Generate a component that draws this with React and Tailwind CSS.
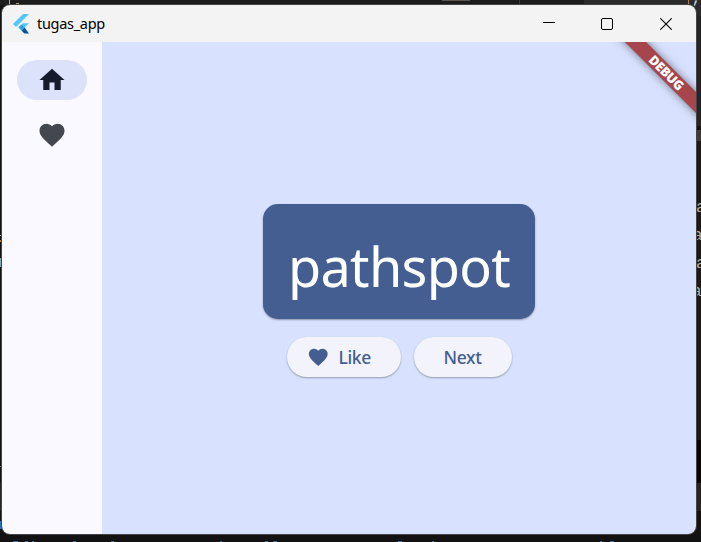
import React from "react";

const HOME = "M10 20v-6h4v6h5v-8h3L12 3 2 12h3v8z";
const HEART =
  "M12 21.35l-1.45-1.32C5.4 15.36 2 12.28 2 8.5 2 5.42 4.42 3 7.5 3c1.74 0 3.41.81 4.5 2.09C13.09 3.81 14.76 3 16.5 3 19.58 3 22 5.42 22 8.5c0 3.78-3.4 6.86-8.55 11.54L12 21.35z";

function Glyph({ d, className }) {
  return (
    <svg viewBox="0 0 24 24" fill="currentColor" className={className}>
      <path d={d} />
    </svg>
  );
}

function FlutterLogo() {
  return (
    <svg viewBox="0 0 16 20" className="h-5 w-4 shrink-0">
      <path d="M10 0H16L3.1 12.9L0 9.9Z" fill="#54c5f8" />
      <path d="M10 9.2H16L8.6 16.4L5.5 13.3Z" fill="#54c5f8" />
      <path d="M5.5 13.3L8.6 10.4L11.6 13.4L8.6 16.4Z" fill="#29a5e8" />
      <path d="M8.6 16.4L11.6 13.4L16 19.6H11.3Z" fill="#01579b" />
    </svg>
  );
}

// Editor visible around the window's edges
function Editor() {
  return (
    <div className="absolute inset-0 overflow-hidden bg-[#121212] font-['Liberation_Mono',monospace] text-[16px] leading-none text-[#b0b0b0]">
      <div className="absolute left-0 top-0 h-[5px] w-full bg-[#1c1c1c]" />
      <div className="absolute left-[584px] top-0 h-[16px] w-[117px] bg-[#2b2b2b]" />
      <div className="absolute left-[519px] top-0 h-[5px] w-px bg-[#383838]" />
      <div className="absolute left-[9px] top-0 h-[5px] w-px bg-[#78b9e8]" />
      <div className="absolute left-[16px] top-0 mt-[3px] h-[2px] w-[3px] bg-[#a99a85]" />
      <div className="absolute left-[442px] top-0 h-px w-[28px] bg-[#5c5651]" />
      <div className="absolute left-[691px] -top-[9px] text-[#c4cdd3]">;</div>
      <div className="absolute left-[688px] top-0 h-[5px] w-px bg-[#b77a4d]" />
      <div className="absolute left-[696px] top-[16px] h-[110px] w-[5px] bg-[#252525]" />
      <div className="absolute left-[696px] top-[130px] h-[11px] w-[5px] bg-[#3b3b3b]" />
      <div className="absolute left-[696px] top-[141px] h-[300px] w-[5px] bg-[#1a1a1a]" />
      <div className="absolute left-[696px] top-[440px] h-[43px] w-[5px] bg-[#060606]" />
      <div className="absolute left-[696px] top-[483px] h-[28px] w-[5px] bg-[#252525]" />
      <div className="absolute left-[696px] top-[200px]">a</div>
      <div className="absolute left-[693px] top-[228px]">a</div>
      <div className="absolute left-[696px] top-[256px]">a</div>
      <div className="absolute left-[692px] top-[284px]">a</div>
      <div className="absolute left-0 top-[235px] h-px w-[2px] bg-[#a9bcc0]" />
      <div className="absolute left-0 top-[240px] h-[2px] w-[2px] bg-[#b9792c]" />
      <div className="absolute left-0 top-[258px] h-[9px] w-[2px] bg-[#83a9b2]" />
      <div className="absolute left-0 top-[466px] h-px w-[2px] bg-[#777777]" />
      <div className="absolute left-0 top-[483px] h-[28px] w-[2px] bg-[#252525]" />
      <div className="absolute left-0 top-[521px] h-[8px] w-[2px] bg-[#287ac5]" />
      {[
        [13, 5], [25, 3], [32, 2], [73, 3], [111, 3], [220, 2], [265, 3], [273, 4],
        [398, 4], [432, 2], [600, 2], [610, 4],
      ].map(([x, w]) => (
        <div key={x} className="absolute top-[541px] h-px bg-[#2470b8]" style={{ left: x, width: w }} />
      ))}
    </div>
  );
}

function TitleBar() {
  return (
    <header className="flex h-[37px] shrink-0 items-center bg-[#f3f3f3] pl-[11px] text-black">
      <FlutterLogo />
      <span className="ml-2 pb-[2px] text-[14.5px] leading-5 tracking-[-0.3px]">tugas_app</span>
      <div className="ml-auto flex h-full items-center">
        <span className="flex w-[58px] justify-center">
          <span className="h-px w-3 -translate-y-px bg-black" />
        </span>
        <span className="flex w-[58px] justify-center">
          <span className="h-3 w-3 rounded-[2px] border border-black" />
        </span>
        <span className="flex w-[60px] justify-center">
          <svg viewBox="0 0 12 12" className="h-3 w-3" fill="none" stroke="black" strokeWidth="1.1">
            <path d="M0.3 0.3L11.7 11.7M11.7 0.3L0.3 11.7" />
          </svg>
        </span>
      </div>
    </header>
  );
}

function Button({ children, className }) {
  return (
    <button
      className={`flex h-10 items-center rounded-full bg-[#f3f4fb] text-[17.5px] font-medium leading-none tracking-[-0.35px] text-[#445e91] shadow-[0_1px_2px_rgba(0,0,0,0.32)] ${className}`}
    >
      {children}
    </button>
  );
}

export default function App() {
  return (
    <div className="relative h-[542px] w-[701px] overflow-hidden p-0 font-['Noto_Sans',sans-serif]">
      <Editor />
      <div className="relative ml-[2px] flex h-[534px] w-[694px] flex-col pt-[5px]">
        <div className="flex min-h-0 flex-1 flex-col overflow-hidden rounded-[8px] shadow-[0_0_0_1px_#444444]">
          <TitleBar />
          <div className="flex min-h-0 flex-1">
            <nav className="flex w-[100px] shrink-0 flex-col items-center bg-[#faf9ff] pt-[18px]">
              <div className="flex h-10 w-[70px] items-center justify-center rounded-full bg-[#dbe2f9] text-[#151b2c]">
                <Glyph d={HOME} className="h-[30px] w-[30px]" />
              </div>
              <div className="mt-[15px] flex h-10 w-[70px] items-center justify-center text-[#44474f]">
                <Glyph d={HEART} className="h-[30px] w-[30px]" />
              </div>
            </nav>
            <main className="relative flex flex-1 flex-col items-center overflow-hidden bg-[#d8e2ff] pt-[162px]">
              <section className="flex h-[115px] w-[272px] items-center justify-center rounded-[15px] bg-[#445e91] pt-[8px] text-[54px] leading-[76px] tracking-[-0.7px] text-white shadow-[0_1px_2px_rgba(0,0,0,0.35)]">
                <span>pathspot</span>
              </section>
              <div className="mt-[18px] flex gap-[13px]">
                <Button className="w-[114px] pl-[20px]">
                  <Glyph d={HEART} className="mr-[9.5px] h-[22.5px] w-[22.5px] shrink-0" />
                  <span className="pt-[2px]">Like</span>
                </Button>
                <Button className="w-[98px] justify-center">
                  <span className="pt-[2px]">Next</span>
                </Button>
              </div>
              <div className="absolute -right-[41px] top-[23.5px] flex h-[15px] w-[140px] rotate-45 items-center justify-center bg-[#a6454c] text-[13px] font-black leading-none tracking-[-0.3px] text-white shadow-[0_0_8px_rgba(0,0,0,0.5)]">
                <span className="-translate-x-[1px]">DEBUG</span>
              </div>
            </main>
          </div>
        </div>
      </div>
    </div>
  );
}
